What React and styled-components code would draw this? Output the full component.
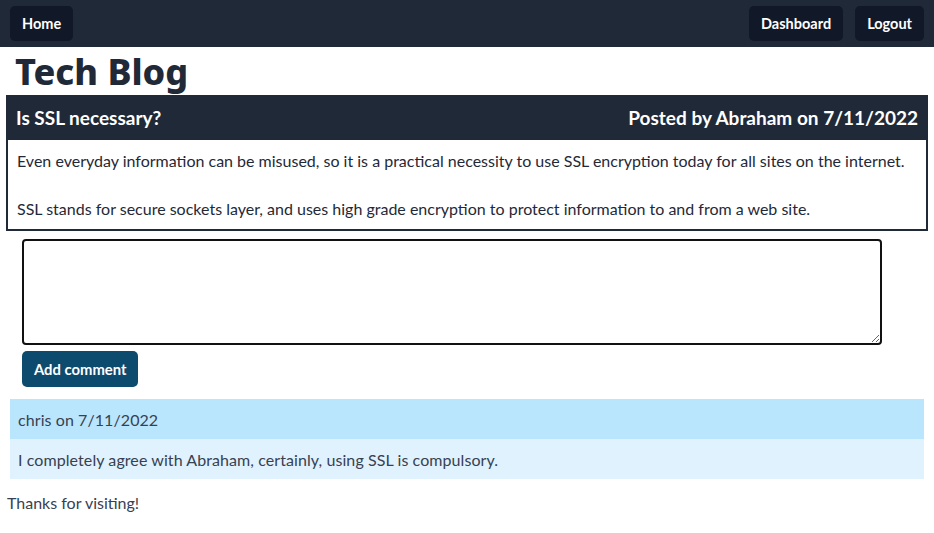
import styled, { createGlobalStyle } from 'styled-components';

const GlobalStyle = createGlobalStyle`
  html, body {
    margin: 0;
    padding: 0;
    background: #ffffff;
    font-family: Lato, "Noto Sans", sans-serif;
    color: #1f2937;
  }
`;

const Nav = styled.nav`
  display: flex;
  justify-content: space-between;
  align-items: center;
  height: 47px;
  padding: 0 10px;
  background: #1f2937;
  box-sizing: border-box;
`;

const NavGroup = styled.div`
  display: flex;
  gap: 12px;
`;

const NavButton = styled.a`
  display: inline-flex;
  align-items: center;
  height: 35px;
  padding: 0 12px;
  border-radius: 5px;
  background: #111827;
  color: #ffffff;
  font-size: 14.5px;
  font-weight: 700;
  text-decoration: none;
`;

const Title = styled.h1`
  margin: 0;
  padding: 2px 15px 0;
  font-family: "Noto Sans", sans-serif;
  font-size: 36px;
  line-height: 46px;
  font-weight: 800;
  color: #1f2937;
`;

const Post = styled.article`
  margin: 0 6px;
`;

const PostHeader = styled.header`
  display: flex;
  justify-content: space-between;
  align-items: center;
  height: 45px;
  padding: 0 10px;
  background: #1f2937;
  color: #ffffff;
  font-size: 19px;
  font-weight: 700;
`;

const PostBody = styled.div`
  border: 2px solid #1f2937;
  border-top: none;
  padding: 9px 9px 8px;
  font-size: 16px;
  color: #1f2937;

  p {
    margin: 0 0 24px;
    line-height: 24px;
  }
  p:last-child {
    margin-bottom: 0;
  }
`;

const CommentForm = styled.form`
  display: flex;
  flex-direction: column;
  align-items: flex-start;
  gap: 6px;
  padding: 8px 52px 12px 22px;
`;

const TextArea = styled.textarea`
  width: 100%;
  height: 106px;
  box-sizing: border-box;
  border: 2px solid #111111;
  border-radius: 4px;
  font-family: inherit;
  font-size: 16px;
  resize: vertical;
  outline: none;
`;

const SubmitButton = styled.button`
  height: 36px;
  padding: 0 12px;
  border: none;
  border-radius: 5px;
  background: #0c4a6e;
  color: #ffffff;
  font-family: inherit;
  font-size: 14.8px;
  font-weight: 700;
`;

const Comment = styled.div`
  margin: 0 10px;
`;

const CommentRow = styled.div`
  height: 40px;
  display: flex;
  align-items: center;
  padding: 0 8px;
  background: ${p => (p.$head ? '#bae6fd' : '#e0f2fe')};
  color: #374151;
  font-size: 16px;
  letter-spacing: 0.08px;
`;

const Footer = styled.footer`
  padding: 14px 7px;
  font-size: 16px;
  color: #374151;
`;

export default function App() {
  return (
    <>
      <GlobalStyle />
      <Nav>
        <NavButton href="#">Home</NavButton>
        <NavGroup>
          <NavButton href="#">Dashboard</NavButton>
          <NavButton href="#">Logout</NavButton>
        </NavGroup>
      </Nav>
      <Title>Tech Blog</Title>
      <Post>
        <PostHeader>
          <span>Is SSL necessary?</span>
          <span>Posted by Abraham on 7/11/2022</span>
        </PostHeader>
        <PostBody>
          <p>Even everyday information can be misused, so it is a practical necessity to use SSL encryption today for all sites on the internet.</p>
          <p>SSL stands for secure sockets layer, and uses high grade encryption to protect information to and from a web site.</p>
        </PostBody>
      </Post>
      <CommentForm onSubmit={e => e.preventDefault()}>
        <TextArea />
        <SubmitButton type="submit">Add comment</SubmitButton>
      </CommentForm>
      <Comment>
        <CommentRow $head>chris on 7/11/2022</CommentRow>
        <CommentRow>I completely agree with Abraham, certainly, using SSL is compulsory.</CommentRow>
      </Comment>
      <Footer>Thanks for visiting!</Footer>
    </>
  );
}
